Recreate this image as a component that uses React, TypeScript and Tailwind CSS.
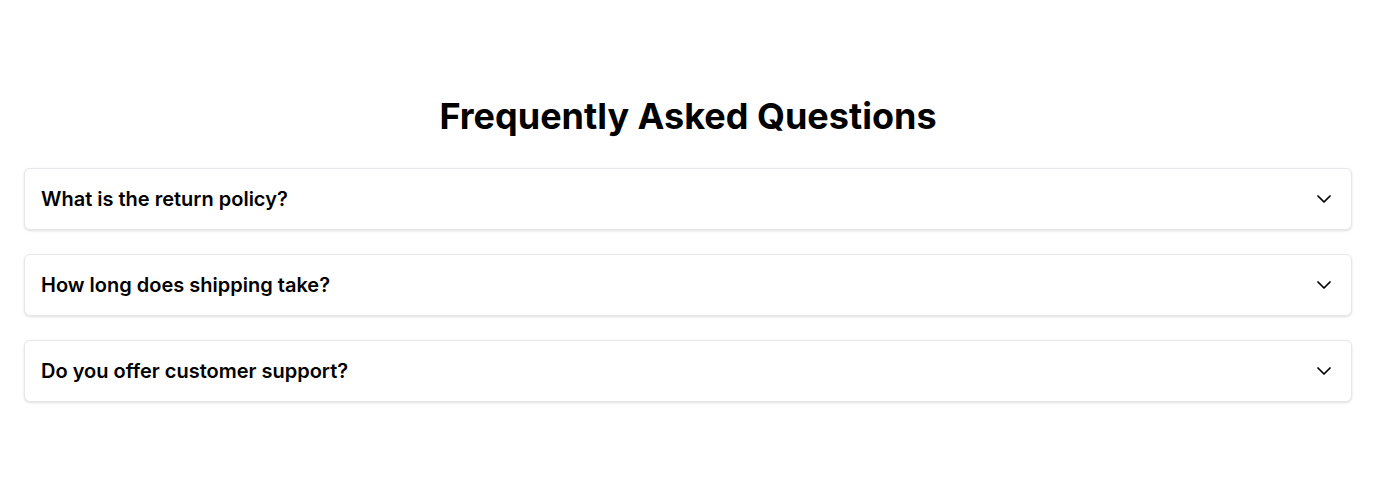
import { useState } from "react";
import { ChevronDown } from "lucide-react";

const faqs = [
    { q: "What is the return policy?", a: "You can return any item within 30 days of purchase for a full refund." },
    { q: "How long does shipping take?", a: "Standard shipping takes 5-7 business days." },
    { q: "Do you offer customer support?", a: "Yes, our support team is available 24/7 by email and chat." },
];

export default function App() {
    const [open, setOpen] = useState<number | null>(null);

    return (
        <div className="min-h-screen bg-white px-6 pt-24 font-['Inter',sans-serif] text-black">
            <h1 className="mb-8 text-center text-4xl font-bold">Frequently Asked Questions</h1>
            <div className="space-y-6">
                {faqs.map((f, i) => (
                    <div key={f.q} className="rounded-md border border-gray-200 bg-white shadow-sm">
                        <button
                            className="flex w-full items-center justify-between py-4 pl-4 pr-[15px] text-left"
                            onClick={() => setOpen(open === i ? null : i)}
                        >
                            <span className="text-xl leading-7 font-semibold">{f.q}</span>
                            <ChevronDown size={24} strokeWidth={1.75} className={open === i ? "rotate-180" : ""} />
                        </button>
                        {open === i && <div className="px-4 pb-4 text-gray-600">{f.a}</div>}
                    </div>
                ))}
            </div>
        </div>
    );
}
